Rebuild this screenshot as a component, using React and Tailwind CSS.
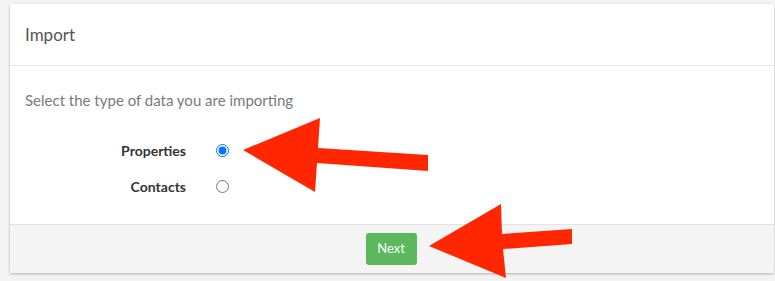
import React, { useState } from "react";

const Arrows = () => (
  <svg
    className="absolute left-0 top-0 pointer-events-none"
    width="775"
    height="281"
    viewBox="0 0 775 281"
  >
    <polygon
      points="243,150 320,118 318,148 428,155 428,171 317,163 315,192"
      fill="#ff2600"
    />
    <polygon
      points="429,246 501,204 502,234 572,229 572,244 503,249 506,278"
      fill="#ff2600"
    />
  </svg>
);

const App = () => {
  const [type, setType] = useState("properties");

  return (
    <div
      className="relative w-[775px] h-[281px] bg-[#f3f3f3] pt-[4px] px-[10px] overflow-hidden"
      style={{ fontFamily: "Lato, 'Open Sans', sans-serif" }}
    >
      <div className="w-[764px] bg-white rounded-[2px] shadow-[0_1px_3px_rgba(0,0,0,0.28)]">
        {/* header */}
        <div className="h-[62px] flex items-center px-[15px] border-b border-[#e6e6e6]">
          <h3 className="text-[17px] text-[#555]">Import</h3>
        </div>

        {/* body */}
        <div className="h-[158px] px-[15px] pt-[23px]">
          <p className="text-[15px] text-[#7a7a7a]">
            Select the type of data you are importing
          </p>

          <div className="mt-[29px] flex flex-col gap-[17px]">
            <label className="flex items-center h-[19px]">
              <span className="w-[161px] text-right text-[14px] font-bold text-[#333]">
                Properties
              </span>
              <input
                type="radio"
                name="type"
                checked={type === "properties"}
                onChange={() => setType("properties")}
                className="ml-[30px] w-[13px] h-[13px]"
              />
            </label>
            <label className="flex items-center h-[19px]">
              <span className="w-[161px] text-right text-[14px] font-bold text-[#333]">
                Contacts
              </span>
              <input
                type="radio"
                name="type"
                checked={type === "contacts"}
                onChange={() => setType("contacts")}
                className="ml-[30px] w-[13px] h-[13px]"
              />
            </label>
          </div>
        </div>

        {/* footer */}
        <div className="h-[49px] flex items-center justify-center bg-[#f4f4f4] border-t border-[#e3e3e3]">
          <button className="w-[51px] h-[32px] rounded-[3px] bg-[#5cb85c] text-white text-[13px] -ml-[2px]">
            Next
          </button>
        </div>
      </div>

      <Arrows />
    </div>
  );
};

export default App;
